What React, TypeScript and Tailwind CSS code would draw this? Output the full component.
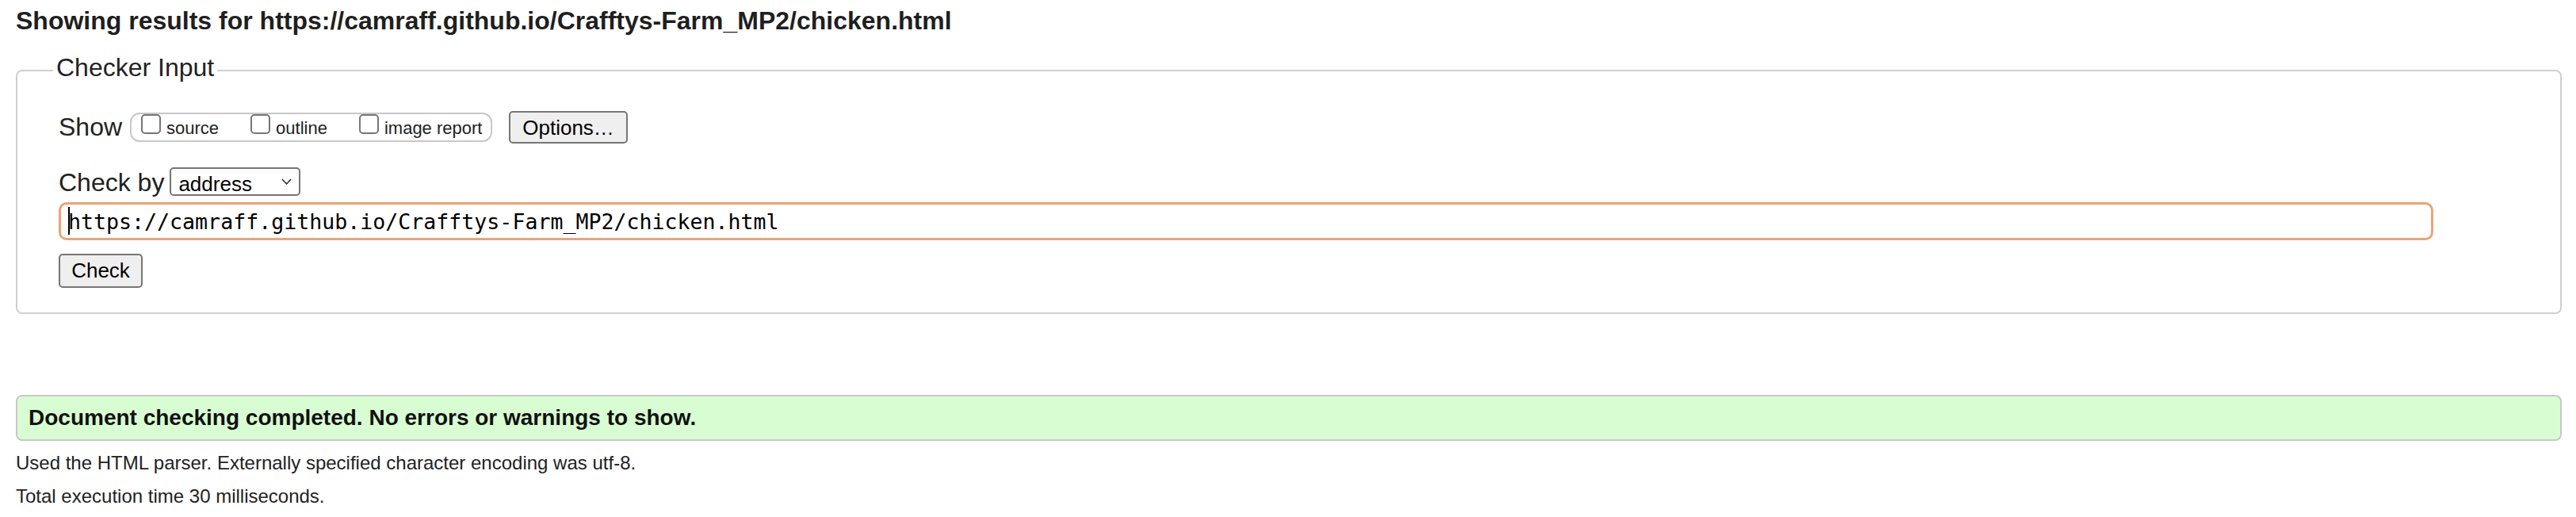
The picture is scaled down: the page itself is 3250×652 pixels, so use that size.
import { useState } from 'react'

const options = ['source', 'outline', 'image report']

function FakeCheckbox({ label }: { label: string }) {
  return (
    <span className="flex items-baseline gap-[7px]">
      <span className="block w-[25px] h-[25px] border-2 border-[#767676] rounded-[5px] bg-white" role="checkbox" aria-checked="false" />
      <span className="text-[22px] leading-[24px]">{label}</span>
    </span>
  )
}

export default function App() {
  const [url] = useState('https://camraff.github.io/Crafftys-Farm_MP2/chicken.html')

  return (
    <div className="w-[3250px] h-[652px] bg-white text-[#222] font-['Liberation_Sans',Arial,sans-serif] pl-[20px] pr-[18px] pt-[7px] overflow-hidden">
      <h2 className="text-[32px] leading-[38px] font-bold text-[#1f1f1f]">
        Showing results for {url}
      </h2>

      <fieldset className="mt-[22px] border-2 border-[#cfcfcf] rounded-[8px] pl-[52px] pt-[30px] pb-[31px]">
        <legend className="text-[32px] leading-[37px] pb-[6px] px-[4px] ml-[-7px]">Checker Input</legend>

        <div className="flex items-center h-[41px]">
          <span className="text-[32px] leading-[37px]">Show</span>
          <div className="ml-[10px] w-[457px] h-[37px] border-2 border-[#c8c8c8] rounded-[12px] flex items-baseline gap-[40px] pl-[12px]">
            {options.map((o) => (
              <FakeCheckbox key={o} label={o} />
            ))}
          </div>
          <button className="ml-[21px] w-[150px] h-[41px] border-2 border-[#767676] rounded-[5px] bg-[#efefef] text-[26px] text-black">
            Options…
          </button>
        </div>

        <div className="flex items-baseline mt-[30px]">
          <span className="text-[32px] leading-[37px] mr-[7px]">Check by</span>
          <div className="relative">
            <select className="appearance-none w-[165px] h-[36px] border-2 border-[#767676] rounded-[5px] bg-white text-[26px] text-black pl-[9px]">
              <option>address</option>
              <option>file upload</option>
              <option>text input</option>
            </select>
            <svg className="absolute right-[11px] top-[14px]" width="13" height="8" viewBox="0 0 13 8" fill="none">
              <polyline points="1,1 6.5,7 12,1" stroke="#222" strokeWidth="1.4" />
            </svg>
          </div>
        </div>

        <div className="relative mt-[6px] w-[2996px]">
          <input
            type="text"
            defaultValue={url}
            className="w-full h-[48px] border-[3px] border-[#e9a575] rounded-[10px] pl-[9px] text-[26.6px] text-black font-['DejaVu_Sans_Mono',Menlo,monospace] outline-none"
          />
          <span className="absolute left-[12px] top-[6px] w-[2px] h-[35px] bg-black" />
        </div>

        <button className="mt-[17px] w-[106px] h-[43px] border-2 border-[#767676] rounded-[5px] bg-[#efefef] text-[26px] text-black">
          Check
        </button>
      </fieldset>

      <div className="mt-[102px] h-[58px] border-2 border-[#c8c8c8] rounded-[8px] bg-[#d8fdd2] flex items-center pl-[14px]">
        <p className="text-[28px] font-bold text-[#111]">Document checking completed. No errors or warnings to show.</p>
      </div>

      <p className="mt-[14px] text-[24px] leading-[28px]">
        Used the HTML parser. Externally specified character encoding was utf-8.
      </p>
      <p className="mt-[14px] text-[24px] leading-[28px]">Total execution time 30 milliseconds.</p>
    </div>
  )
}
